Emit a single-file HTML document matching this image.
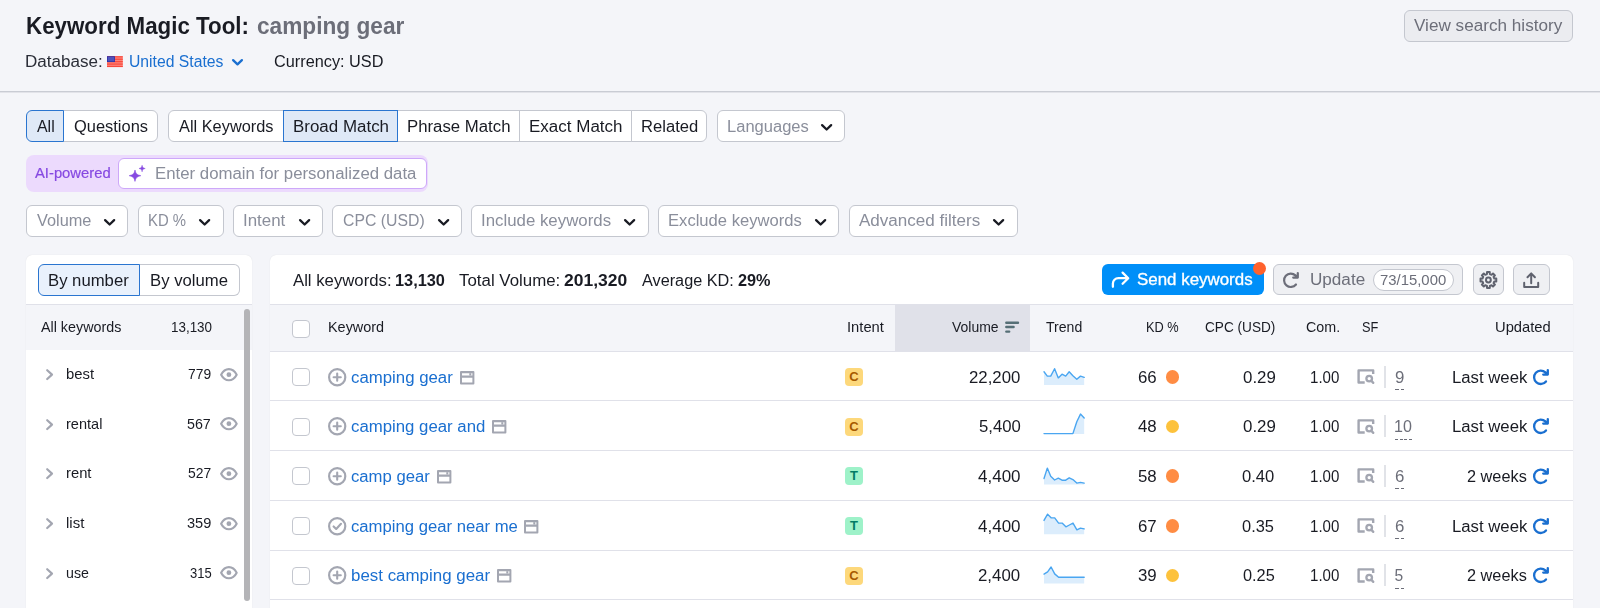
<!DOCTYPE html>
<html lang="en">
<head>
<meta charset="utf-8">
<title>Keyword Magic Tool</title>
<style>
*{box-sizing:border-box;margin:0;padding:0}
html,body{width:1600px;height:608px;overflow:hidden;background:#f4f5f9;font-family:"Liberation Sans",sans-serif}
body{position:relative}
.a{position:absolute}
.t{position:absolute;white-space:pre;z-index:5;transform-origin:0 50%}
.b{position:absolute;border:1px solid #c4c7cf;background:#fff}
.sel{background:#dfe9f7;border-color:#2a75d0;z-index:2}
.ln{position:absolute;height:1px;background:#e0e1e9}
.cb{position:absolute;left:292px;width:18px;height:18px;border:1px solid #c4c7cf;border-radius:4px;background:#fff}
.ib{position:absolute;left:845px;width:18px;height:18px;border-radius:4px;font-size:13px;font-weight:bold;line-height:18px;text-align:center}
.ic{background:#fdd87b;color:#a65a00}
.it{background:#9ef2c9;color:#007c65}
.dot{position:absolute;left:1165.8px;width:13.5px;height:13.5px;border-radius:50%}
.vd{position:absolute;left:1384px;width:2px;height:22px;background:#e1e3e8}
.du{position:absolute;height:1px;background:repeating-linear-gradient(90deg,#6c6e79 0,#6c6e79 4px,transparent 4px,transparent 5.9px)}
svg{position:absolute;overflow:visible}
#tx{position:absolute;left:0;top:0;width:1600px;height:608px;z-index:5;will-change:transform}

</style>
</head>
<body>
<svg style="left:107.2px;top:55.8px" width="15.8" height="11.3" viewBox="0 0 16 11"><rect width="16" height="11" rx="0.6" fill="#ff8379"/><g fill="#f7493d"><rect y="0" width="16" height="1.2"/><rect y="2.45" width="16" height="1.2"/><rect y="4.9" width="16" height="1.2"/><rect y="7.35" width="16" height="1.2"/><rect y="9.8" width="16" height="1.2"/></g><rect width="8" height="5.9" fill="#2a2fa8"/><rect x="0.8" y="0.8" width="6.4" height="4.3" fill="#4d52ba"/></svg>
<svg style="left:232px;top:59px" width="11" height="6.5" viewBox="0 0 11 6.5"><path d="M1.1 1.1 L5.5 5.4 L9.9 1.1" fill="none" stroke="#1a6fd0" stroke-width="2.3" stroke-linecap="round" stroke-linejoin="round"/></svg>
<div class="b" style="left:1404px;top:10px;width:169px;height:32px;border-radius:6px;background:#ebecf0"></div>
<div class="a" style="left:0;top:91px;width:1600px;height:1px;background:#c9ccd4"></div><div class="a" style="left:0;top:92px;width:1600px;height:1px;background:#e2e3e9"></div>
<div class="b sel" style="left:26px;top:110px;width:38px;height:32px;border-radius:6px 0 0 6px"></div>
<div class="b" style="left:63px;top:110px;width:95px;height:32px;border-radius:0 6px 6px 0"></div>
<div class="b" style="left:168px;top:110px;width:116px;height:32px;border-radius:6px 0 0 6px"></div>
<div class="b sel" style="left:283px;top:110px;width:115px;height:32px"></div>
<div class="b" style="left:397px;top:110px;width:123px;height:32px"></div>
<div class="b" style="left:519px;top:110px;width:113px;height:32px"></div>
<div class="b" style="left:631px;top:110px;width:76px;height:32px;border-radius:0 6px 6px 0"></div>
<div class="b" style="left:717px;top:110px;width:128px;height:32px;border-radius:6px"></div>
<svg style="left:821px;top:123.8px" width="11.25" height="6.6" viewBox="0 0 11.25 6.6"><path d="M1.1 1.1 L5.625 5.5 L10.15 1.1" fill="none" stroke="#191b23" stroke-width="2.3" stroke-linecap="round" stroke-linejoin="round"/></svg>
<div class="a" style="left:26px;top:155px;width:402px;height:36.5px;border-radius:8px;background:#ecdafd"></div>
<div class="a" style="left:118px;top:158px;width:309px;height:31px;border-radius:6px;background:#fff;border:1px solid #cda8f9"></div>
<svg style="left:129px;top:165.3px" width="16.4" height="16.6" viewBox="0 0 16.4 16.6"><path d="M6 5 C6.7 8.6 7.9 9.9 11.8 10.7 C7.9 11.5 6.7 12.8 6 16.4 C5.3 12.8 4.1 11.5 0.2 10.7 C4.1 9.9 5.3 8.6 6 5 Z" fill="#8649e1" stroke="#8649e1" stroke-width="0.6" stroke-linejoin="round"/><path d="M13.1 0.3 C13.45 2.5 14 3.1 16.2 3.5 C14 3.9 13.45 4.5 13.1 6.8 C12.75 4.5 12.2 3.9 10 3.5 C12.2 3.1 12.75 2.5 13.1 0.3 Z" fill="#8649e1" stroke="#8649e1" stroke-width="0.5" stroke-linejoin="round"/></svg>
<div class="b" style="left:26px;top:205px;width:102px;height:32px;border-radius:6px"></div>
<svg style="left:104px;top:218.6px" width="11.25" height="6.6" viewBox="0 0 11.25 6.6"><path d="M1.1 1.1 L5.625 5.5 L10.15 1.1" fill="none" stroke="#191b23" stroke-width="2.3" stroke-linecap="round" stroke-linejoin="round"/></svg>
<div class="b" style="left:138px;top:205px;width:86px;height:32px;border-radius:6px"></div>
<svg style="left:199.25px;top:218.6px" width="11.25" height="6.6" viewBox="0 0 11.25 6.6"><path d="M1.1 1.1 L5.625 5.5 L10.15 1.1" fill="none" stroke="#191b23" stroke-width="2.3" stroke-linecap="round" stroke-linejoin="round"/></svg>
<div class="b" style="left:233px;top:205px;width:90px;height:32px;border-radius:6px"></div>
<svg style="left:299px;top:218.6px" width="11.25" height="6.6" viewBox="0 0 11.25 6.6"><path d="M1.1 1.1 L5.625 5.5 L10.15 1.1" fill="none" stroke="#191b23" stroke-width="2.3" stroke-linecap="round" stroke-linejoin="round"/></svg>
<div class="b" style="left:332px;top:205px;width:130px;height:32px;border-radius:6px"></div>
<svg style="left:437.5px;top:218.6px" width="11.25" height="6.6" viewBox="0 0 11.25 6.6"><path d="M1.1 1.1 L5.625 5.5 L10.15 1.1" fill="none" stroke="#191b23" stroke-width="2.3" stroke-linecap="round" stroke-linejoin="round"/></svg>
<div class="b" style="left:471px;top:205px;width:178px;height:32px;border-radius:6px"></div>
<svg style="left:624.25px;top:218.6px" width="11.25" height="6.6" viewBox="0 0 11.25 6.6"><path d="M1.1 1.1 L5.625 5.5 L10.15 1.1" fill="none" stroke="#191b23" stroke-width="2.3" stroke-linecap="round" stroke-linejoin="round"/></svg>
<div class="b" style="left:658px;top:205px;width:181px;height:32px;border-radius:6px"></div>
<svg style="left:815px;top:218.6px" width="11.25" height="6.6" viewBox="0 0 11.25 6.6"><path d="M1.1 1.1 L5.625 5.5 L10.15 1.1" fill="none" stroke="#191b23" stroke-width="2.3" stroke-linecap="round" stroke-linejoin="round"/></svg>
<div class="b" style="left:849px;top:205px;width:169px;height:32px;border-radius:6px"></div>
<svg style="left:993px;top:218.6px" width="11.25" height="6.6" viewBox="0 0 11.25 6.6"><path d="M1.1 1.1 L5.625 5.5 L10.15 1.1" fill="none" stroke="#191b23" stroke-width="2.3" stroke-linecap="round" stroke-linejoin="round"/></svg>
<div class="a" style="left:26px;top:255px;width:225.5px;height:360px;background:#fff;border-radius:6px 6px 0 0;box-shadow:0 0 1px 0 rgba(25,27,35,.14)"></div>
<div class="b sel" style="left:38px;top:264px;width:101.5px;height:31.5px;border-radius:6px 0 0 6px;background:#e9f1fc"></div>
<div class="b" style="left:139px;top:264px;width:100.5px;height:31.5px;border-radius:0 6px 6px 0;border-left:none"></div>
<div class="ln" style="left:26px;top:304px;width:225.5px"></div>
<div class="a" style="left:26px;top:305px;width:225.5px;height:44.5px;background:#f4f5f9"></div>
<div class="a" style="left:244px;top:308.5px;width:6px;height:292px;border-radius:3px;background:#b4b4b7"></div>
<svg style="left:45.8px;top:368.9px" width="7.4" height="11.2" viewBox="0 0 7.4 11.2"><path d="M1.2 1.2 L6 5.6 L1.2 10" fill="none" stroke="#a3a6b1" stroke-width="2.2" stroke-linecap="round" stroke-linejoin="round"/></svg>
<svg style="left:220.2px;top:367.7px" width="17.8" height="13.4" viewBox="0 0 17.8 13.4"><path d="M1.1 6.7 C3.1 2.9 5.8 1.1 8.9 1.1 C12 1.1 14.7 2.9 16.7 6.7 C14.7 10.5 12 12.3 8.9 12.3 C5.8 12.3 3.1 10.5 1.1 6.7 Z" fill="none" stroke="#a3a6b1" stroke-width="2.1" stroke-linejoin="round"/><circle cx="8.9" cy="6.7" r="2.4" fill="#a3a6b1"/></svg>
<svg style="left:45.8px;top:418.6px" width="7.4" height="11.2" viewBox="0 0 7.4 11.2"><path d="M1.2 1.2 L6 5.6 L1.2 10" fill="none" stroke="#a3a6b1" stroke-width="2.2" stroke-linecap="round" stroke-linejoin="round"/></svg>
<svg style="left:220.2px;top:417.4px" width="17.8" height="13.4" viewBox="0 0 17.8 13.4"><path d="M1.1 6.7 C3.1 2.9 5.8 1.1 8.9 1.1 C12 1.1 14.7 2.9 16.7 6.7 C14.7 10.5 12 12.3 8.9 12.3 C5.8 12.3 3.1 10.5 1.1 6.7 Z" fill="none" stroke="#a3a6b1" stroke-width="2.1" stroke-linejoin="round"/><circle cx="8.9" cy="6.7" r="2.4" fill="#a3a6b1"/></svg>
<svg style="left:45.8px;top:468.2px" width="7.4" height="11.2" viewBox="0 0 7.4 11.2"><path d="M1.2 1.2 L6 5.6 L1.2 10" fill="none" stroke="#a3a6b1" stroke-width="2.2" stroke-linecap="round" stroke-linejoin="round"/></svg>
<svg style="left:220.2px;top:467.0px" width="17.8" height="13.4" viewBox="0 0 17.8 13.4"><path d="M1.1 6.7 C3.1 2.9 5.8 1.1 8.9 1.1 C12 1.1 14.7 2.9 16.7 6.7 C14.7 10.5 12 12.3 8.9 12.3 C5.8 12.3 3.1 10.5 1.1 6.7 Z" fill="none" stroke="#a3a6b1" stroke-width="2.1" stroke-linejoin="round"/><circle cx="8.9" cy="6.7" r="2.4" fill="#a3a6b1"/></svg>
<svg style="left:45.8px;top:517.9px" width="7.4" height="11.2" viewBox="0 0 7.4 11.2"><path d="M1.2 1.2 L6 5.6 L1.2 10" fill="none" stroke="#a3a6b1" stroke-width="2.2" stroke-linecap="round" stroke-linejoin="round"/></svg>
<svg style="left:220.2px;top:516.7px" width="17.8" height="13.4" viewBox="0 0 17.8 13.4"><path d="M1.1 6.7 C3.1 2.9 5.8 1.1 8.9 1.1 C12 1.1 14.7 2.9 16.7 6.7 C14.7 10.5 12 12.3 8.9 12.3 C5.8 12.3 3.1 10.5 1.1 6.7 Z" fill="none" stroke="#a3a6b1" stroke-width="2.1" stroke-linejoin="round"/><circle cx="8.9" cy="6.7" r="2.4" fill="#a3a6b1"/></svg>
<svg style="left:45.8px;top:567.6px" width="7.4" height="11.2" viewBox="0 0 7.4 11.2"><path d="M1.2 1.2 L6 5.6 L1.2 10" fill="none" stroke="#a3a6b1" stroke-width="2.2" stroke-linecap="round" stroke-linejoin="round"/></svg>
<svg style="left:220.2px;top:566.4px" width="17.8" height="13.4" viewBox="0 0 17.8 13.4"><path d="M1.1 6.7 C3.1 2.9 5.8 1.1 8.9 1.1 C12 1.1 14.7 2.9 16.7 6.7 C14.7 10.5 12 12.3 8.9 12.3 C5.8 12.3 3.1 10.5 1.1 6.7 Z" fill="none" stroke="#a3a6b1" stroke-width="2.1" stroke-linejoin="round"/><circle cx="8.9" cy="6.7" r="2.4" fill="#a3a6b1"/></svg>
<div class="a" style="left:270px;top:255px;width:1303px;height:360px;background:#fff;border-radius:6px 6px 0 0;box-shadow:0 0 1px 0 rgba(25,27,35,.14)"></div>
<div class="a" style="left:1102px;top:264px;width:161.5px;height:31px;border-radius:6px;background:#008ff8"></div>
<svg style="left:1111px;top:271px" width="19" height="17" viewBox="0 0 19 17"><path d="M1.9 15.8 V12.6 A5.4 5.4 0 0 1 7.3 7.2 H16.6 M11.6 1.6 L17.2 7.2 L11.6 12.8" fill="none" stroke="#fff" stroke-width="2.3" stroke-linecap="round" stroke-linejoin="round"/></svg>
<div class="a" style="left:1252.6px;top:261.7px;width:13.6px;height:13.6px;border-radius:50%;background:#ff622d"></div>
<div class="b" style="left:1273px;top:264px;width:190px;height:31px;border-radius:6px;background:#eff0f3"></div>
<svg style="left:1282.9px;top:272.2px" width="16.5" height="16" viewBox="0 0 16.5 16"><path d="M13 12.5 A6.7 6.7 0 1 1 12.4 3.4 L14.5 5.4 M14.8 1.1 V5.6 H10.2" fill="none" stroke="#6c6e79" stroke-width="2.2" stroke-linecap="round" stroke-linejoin="round"/></svg>
<div class="b" style="left:1373px;top:269px;width:81px;height:22px;border-radius:11px"></div>
<div class="b" style="left:1472.5px;top:264px;width:31.5px;height:31px;border-radius:6px;background:#eff0f3"></div>
<svg style="left:1479px;top:270.5px" width="19" height="19" viewBox="0 0 19 19"><path d="M17.28 7.62 L17.28 10.38 L15.33 10.42 L14.60 12.19 L15.95 13.60 L14.00 15.55 L12.59 14.20 L10.82 14.93 L10.78 16.88 L8.02 16.88 L7.98 14.93 L6.21 14.20 L4.80 15.55 L2.85 13.60 L4.20 12.19 L3.47 10.42 L1.52 10.38 L1.52 7.62 L3.47 7.58 L4.20 5.81 L2.85 4.40 L4.80 2.45 L6.21 3.80 L7.98 3.07 L8.02 1.12 L10.78 1.12 L10.82 3.07 L12.59 3.80 L14.00 2.45 L15.95 4.40 L14.60 5.81 L15.33 7.58 Z" fill="none" stroke="#5f626e" stroke-width="2" stroke-linejoin="round"/><circle cx="9.4" cy="9.0" r="2.4" fill="none" stroke="#5f626e" stroke-width="2"/></svg>
<div class="b" style="left:1513px;top:264px;width:37px;height:31px;border-radius:6px;background:#eff0f3"></div>
<svg style="left:1523px;top:271.5px" width="16.5" height="17" viewBox="0 0 16.5 17"><path d="M8.2 11.2 V1.5 M4.5 5.2 L8.2 1.4 L11.9 5.2 M1.2 10.8 V14.9 H15.2 V10.8" fill="none" stroke="#5f626e" stroke-width="2" stroke-linecap="round" stroke-linejoin="round"/></svg>
<div class="ln" style="left:270px;top:304px;width:1303px"></div>
<div class="a" style="left:270px;top:305px;width:1303px;height:46.5px;background:#f4f5f9"></div>
<div class="a" style="left:895px;top:305px;width:135px;height:46.5px;background:#e0e1e9"></div>
<div class="ln" style="left:270px;top:351px;width:1303px"></div>
<svg style="left:1005px;top:321px" width="14.5" height="12" viewBox="0 0 14.5 12"><path d="M1.3 1.7 H13 M1.3 6 H8.6 M1.3 10.6 H4.2" fill="none" stroke="#566f76" stroke-width="2.4" stroke-linecap="round"/></svg>
<div class="cb" style="top:320px"></div>
<div class="ln" style="left:270px;top:400px;width:1303px"></div>
<div class="ln" style="left:270px;top:450px;width:1303px"></div>
<div class="ln" style="left:270px;top:500px;width:1303px"></div>
<div class="ln" style="left:270px;top:550px;width:1303px"></div>
<div class="ln" style="left:270px;top:599px;width:1303px"></div>
<div class="cb" style="top:367.9px"></div>
<svg style="left:328.2px;top:367.5px" width="18.4" height="18.4" viewBox="0 0 18.4 18.4"><circle cx="9.2" cy="9.2" r="8.1" fill="none" stroke="#a3a6b1" stroke-width="2.2"/><path d="M9.2 5.6 V12.8 M5.6 9.2 H12.8" fill="none" stroke="#a3a6b1" stroke-width="2.1" stroke-linecap="round"/></svg>
<svg style="left:459.5px;top:370.5px" width="14.4" height="13.6" viewBox="0 0 14.4 12.6" preserveAspectRatio="none"><path d="M1 1 H13.4 V11.6 H1 Z M1 5.2 H13.4" fill="none" stroke="#a3a6b1" stroke-width="2" stroke-linejoin="round"/><rect x="9.3" y="2" width="2" height="2.2" fill="#a3a6b1"/></svg>
<div class="ib ic" style="top:367.8px">C</div>
<svg style="left:1044px;top:363.5px" width="40.4" height="22" viewBox="0 0 40.4 22"><path d="M0 7.8 L3.3 12.1 L6.7 12.1 L10.6 4.7 L14.3 13.9 L18 10.2 L21.7 12.1 L25.2 7.8 L28.9 11.7 L32.8 15.2 L36.5 12.1 L40.2 13.4 L40.2 21.0 L0 21.0 Z" fill="#dcedfc"/><path d="M0 7.8 L3.3 12.1 L6.7 12.1 L10.6 4.7 L14.3 13.9 L18 10.2 L21.7 12.1 L25.2 7.8 L28.9 11.7 L32.8 15.2 L36.5 12.1 L40.2 13.4" fill="none" stroke="#4aa6f1" stroke-width="1.4" stroke-linejoin="round" stroke-linecap="round"/></svg>
<div class="dot" style="top:370.0px;background:#ff8c43"></div>
<svg style="left:1357.2px;top:368.8px" width="17.4" height="15.4" viewBox="0 0 17.4 15.4"><path d="M7.7 13.5 H1.6 V1.4 H16.2 V4.9" fill="none" stroke="#a3a6b1" stroke-width="2.4" stroke-linejoin="round"/><circle cx="12.2" cy="9.6" r="2.8" fill="none" stroke="#a3a6b1" stroke-width="2.3"/><path d="M14.4 11.9 L16.3 13.9" stroke="#a3a6b1" stroke-width="2.3" stroke-linecap="round"/></svg>
<div class="vd" style="top:365.5px"></div>
<div class="du" style="left:1394.6px;top:388.8px;width:9.6px;background:repeating-linear-gradient(90deg,#6c6e79 0,#6c6e79 4.1px,transparent 4.1px,transparent 5.6px)"></div>
<svg style="left:1533.4px;top:368.7px" width="16.5" height="16" viewBox="0 0 16.5 16"><path d="M13 12.5 A6.7 6.7 0 1 1 12.4 3.4 L14.5 5.4 M14.8 1.1 V5.6 H10.2" fill="none" stroke="#1a6fd0" stroke-width="2.3" stroke-linecap="round" stroke-linejoin="round"/></svg>
<div class="cb" style="top:417.6px"></div>
<svg style="left:328.2px;top:417.2px" width="18.4" height="18.4" viewBox="0 0 18.4 18.4"><circle cx="9.2" cy="9.2" r="8.1" fill="none" stroke="#a3a6b1" stroke-width="2.2"/><path d="M9.2 5.6 V12.8 M5.6 9.2 H12.8" fill="none" stroke="#a3a6b1" stroke-width="2.1" stroke-linecap="round"/></svg>
<svg style="left:491.5px;top:420.2px" width="14.4" height="13.6" viewBox="0 0 14.4 12.6" preserveAspectRatio="none"><path d="M1 1 H13.4 V11.6 H1 Z M1 5.2 H13.4" fill="none" stroke="#a3a6b1" stroke-width="2" stroke-linejoin="round"/><rect x="9.3" y="2" width="2" height="2.2" fill="#a3a6b1"/></svg>
<div class="ib ic" style="top:417.5px">C</div>
<svg style="left:1044px;top:413.2px" width="40.4" height="22" viewBox="0 0 40.4 22"><path d="M0 20.6 L28.9 20.6 L32.8 8.7 L36.5 1.1 L40.2 5.0 L40.2 21.1 L0 21.1 Z" fill="#dcedfc"/><path d="M0 20.6 L28.9 20.6 L32.8 8.7 L36.5 1.1 L40.2 5.0" fill="none" stroke="#4aa6f1" stroke-width="1.4" stroke-linejoin="round" stroke-linecap="round"/></svg>
<div class="dot" style="top:419.7px;background:#fdc23c"></div>
<svg style="left:1357.2px;top:418.5px" width="17.4" height="15.4" viewBox="0 0 17.4 15.4"><path d="M7.7 13.5 H1.6 V1.4 H16.2 V4.9" fill="none" stroke="#a3a6b1" stroke-width="2.4" stroke-linejoin="round"/><circle cx="12.2" cy="9.6" r="2.8" fill="none" stroke="#a3a6b1" stroke-width="2.3"/><path d="M14.4 11.9 L16.3 13.9" stroke="#a3a6b1" stroke-width="2.3" stroke-linecap="round"/></svg>
<div class="vd" style="top:415.2px"></div>
<div class="du" style="left:1394.7px;top:438.5px;width:16.9px;background:repeating-linear-gradient(90deg,#6c6e79 0,#6c6e79 3.3px,transparent 3.3px,transparent 4.5px)"></div>
<svg style="left:1533.4px;top:418.4px" width="16.5" height="16" viewBox="0 0 16.5 16"><path d="M13 12.5 A6.7 6.7 0 1 1 12.4 3.4 L14.5 5.4 M14.8 1.1 V5.6 H10.2" fill="none" stroke="#1a6fd0" stroke-width="2.3" stroke-linecap="round" stroke-linejoin="round"/></svg>
<div class="cb" style="top:467.2px"></div>
<svg style="left:328.2px;top:466.8px" width="18.4" height="18.4" viewBox="0 0 18.4 18.4"><circle cx="9.2" cy="9.2" r="8.1" fill="none" stroke="#a3a6b1" stroke-width="2.2"/><path d="M9.2 5.6 V12.8 M5.6 9.2 H12.8" fill="none" stroke="#a3a6b1" stroke-width="2.1" stroke-linecap="round"/></svg>
<svg style="left:436.5px;top:469.8px" width="14.4" height="13.6" viewBox="0 0 14.4 12.6" preserveAspectRatio="none"><path d="M1 1 H13.4 V11.6 H1 Z M1 5.2 H13.4" fill="none" stroke="#a3a6b1" stroke-width="2" stroke-linejoin="round"/><rect x="9.3" y="2" width="2" height="2.2" fill="#a3a6b1"/></svg>
<div class="ib it" style="top:467.1px">T</div>
<svg style="left:1044px;top:462.8px" width="40.4" height="22" viewBox="0 0 40.4 22"><path d="M0 15.5 L3.3 5.1 L6.7 13.3 L10.6 17.0 L14.3 15.1 L18 17.2 L21.7 17.2 L25.2 14.8 L28.9 16.6 L32.8 20.1 L36.5 19.4 L40.2 20.1 L40.2 21.5 L0 21.5 Z" fill="#dcedfc"/><path d="M0 15.5 L3.3 5.1 L6.7 13.3 L10.6 17.0 L14.3 15.1 L18 17.2 L21.7 17.2 L25.2 14.8 L28.9 16.6 L32.8 20.1 L36.5 19.4 L40.2 20.1" fill="none" stroke="#4aa6f1" stroke-width="1.4" stroke-linejoin="round" stroke-linecap="round"/></svg>
<div class="dot" style="top:469.3px;background:#ff8c43"></div>
<svg style="left:1357.2px;top:468.1px" width="17.4" height="15.4" viewBox="0 0 17.4 15.4"><path d="M7.7 13.5 H1.6 V1.4 H16.2 V4.9" fill="none" stroke="#a3a6b1" stroke-width="2.4" stroke-linejoin="round"/><circle cx="12.2" cy="9.6" r="2.8" fill="none" stroke="#a3a6b1" stroke-width="2.3"/><path d="M14.4 11.9 L16.3 13.9" stroke="#a3a6b1" stroke-width="2.3" stroke-linecap="round"/></svg>
<div class="vd" style="top:464.8px"></div>
<div class="du" style="left:1394.6px;top:488.1px;width:9.6px;background:repeating-linear-gradient(90deg,#6c6e79 0,#6c6e79 4.1px,transparent 4.1px,transparent 5.6px)"></div>
<svg style="left:1533.4px;top:468.0px" width="16.5" height="16" viewBox="0 0 16.5 16"><path d="M13 12.5 A6.7 6.7 0 1 1 12.4 3.4 L14.5 5.4 M14.8 1.1 V5.6 H10.2" fill="none" stroke="#1a6fd0" stroke-width="2.3" stroke-linecap="round" stroke-linejoin="round"/></svg>
<div class="cb" style="top:516.9px"></div>
<svg style="left:328.2px;top:516.5px" width="18.4" height="18.4" viewBox="0 0 18.4 18.4"><circle cx="9.2" cy="9.2" r="8.1" fill="none" stroke="#a3a6b1" stroke-width="2.2"/><path d="M5.6 9.4 L8.2 12 L13 6.8" stroke-linejoin="round" fill="none" stroke="#a3a6b1" stroke-width="2.1" stroke-linecap="round"/></svg>
<svg style="left:524.0px;top:519.5px" width="14.4" height="13.6" viewBox="0 0 14.4 12.6" preserveAspectRatio="none"><path d="M1 1 H13.4 V11.6 H1 Z M1 5.2 H13.4" fill="none" stroke="#a3a6b1" stroke-width="2" stroke-linejoin="round"/><rect x="9.3" y="2" width="2" height="2.2" fill="#a3a6b1"/></svg>
<div class="ib it" style="top:516.8px">T</div>
<svg style="left:1044px;top:512.5px" width="40.4" height="22" viewBox="0 0 40.4 22"><path d="M0 7.4 L3.6 1.2 L7.1 4.7 L10.7 4.9 L14.6 10.1 L18.1 10.1 L21.9 13.8 L25.4 12.0 L29 10.1 L32.9 16.8 L36.4 15.1 L40.2 15.9 L40.2 21.3 L0 21.3 Z" fill="#dcedfc"/><path d="M0 7.4 L3.6 1.2 L7.1 4.7 L10.7 4.9 L14.6 10.1 L18.1 10.1 L21.9 13.8 L25.4 12.0 L29 10.1 L32.9 16.8 L36.4 15.1 L40.2 15.9" fill="none" stroke="#4aa6f1" stroke-width="1.4" stroke-linejoin="round" stroke-linecap="round"/></svg>
<div class="dot" style="top:519.0px;background:#ff8c43"></div>
<svg style="left:1357.2px;top:517.8px" width="17.4" height="15.4" viewBox="0 0 17.4 15.4"><path d="M7.7 13.5 H1.6 V1.4 H16.2 V4.9" fill="none" stroke="#a3a6b1" stroke-width="2.4" stroke-linejoin="round"/><circle cx="12.2" cy="9.6" r="2.8" fill="none" stroke="#a3a6b1" stroke-width="2.3"/><path d="M14.4 11.9 L16.3 13.9" stroke="#a3a6b1" stroke-width="2.3" stroke-linecap="round"/></svg>
<div class="vd" style="top:514.5px"></div>
<div class="du" style="left:1394.6px;top:537.8px;width:9.6px;background:repeating-linear-gradient(90deg,#6c6e79 0,#6c6e79 4.1px,transparent 4.1px,transparent 5.6px)"></div>
<svg style="left:1533.4px;top:517.7px" width="16.5" height="16" viewBox="0 0 16.5 16"><path d="M13 12.5 A6.7 6.7 0 1 1 12.4 3.4 L14.5 5.4 M14.8 1.1 V5.6 H10.2" fill="none" stroke="#1a6fd0" stroke-width="2.3" stroke-linecap="round" stroke-linejoin="round"/></svg>
<div class="cb" style="top:566.6px"></div>
<svg style="left:328.2px;top:566.2px" width="18.4" height="18.4" viewBox="0 0 18.4 18.4"><circle cx="9.2" cy="9.2" r="8.1" fill="none" stroke="#a3a6b1" stroke-width="2.2"/><path d="M9.2 5.6 V12.8 M5.6 9.2 H12.8" fill="none" stroke="#a3a6b1" stroke-width="2.1" stroke-linecap="round"/></svg>
<svg style="left:496.5px;top:569.2px" width="14.4" height="13.6" viewBox="0 0 14.4 12.6" preserveAspectRatio="none"><path d="M1 1 H13.4 V11.6 H1 Z M1 5.2 H13.4" fill="none" stroke="#a3a6b1" stroke-width="2" stroke-linejoin="round"/><rect x="9.3" y="2" width="2" height="2.2" fill="#a3a6b1"/></svg>
<div class="ib ic" style="top:566.5px">C</div>
<svg style="left:1044px;top:562.2px" width="40.4" height="22" viewBox="0 0 40.4 22"><path d="M0 12.1 L3.6 9.8 L7.1 5.0 L10.7 11.9 L14.6 15.3 L40.2 15.3 L40.2 21.4 L0 21.4 Z" fill="#dcedfc"/><path d="M0 12.1 L3.6 9.8 L7.1 5.0 L10.7 11.9 L14.6 15.3 L40.2 15.3" fill="none" stroke="#4aa6f1" stroke-width="1.4" stroke-linejoin="round" stroke-linecap="round"/></svg>
<div class="dot" style="top:568.7px;background:#fdc23c"></div>
<svg style="left:1357.2px;top:567.5px" width="17.4" height="15.4" viewBox="0 0 17.4 15.4"><path d="M7.7 13.5 H1.6 V1.4 H16.2 V4.9" fill="none" stroke="#a3a6b1" stroke-width="2.4" stroke-linejoin="round"/><circle cx="12.2" cy="9.6" r="2.8" fill="none" stroke="#a3a6b1" stroke-width="2.3"/><path d="M14.4 11.9 L16.3 13.9" stroke="#a3a6b1" stroke-width="2.3" stroke-linecap="round"/></svg>
<div class="vd" style="top:564.2px"></div>
<div class="du" style="left:1394.6px;top:587.5px;width:9.6px;background:repeating-linear-gradient(90deg,#6c6e79 0,#6c6e79 4.1px,transparent 4.1px,transparent 5.6px)"></div>
<svg style="left:1533.4px;top:567.4px" width="16.5" height="16" viewBox="0 0 16.5 16"><path d="M13 12.5 A6.7 6.7 0 1 1 12.4 3.4 L14.5 5.4 M14.8 1.1 V5.6 H10.2" fill="none" stroke="#1a6fd0" stroke-width="2.3" stroke-linecap="round" stroke-linejoin="round"/></svg>
<div id="tx">
<div class="t" style="left:25.57px;top:14.18px;font-size:24px;line-height:24px;transform:scaleX(0.9308);color:#191b23;font-weight:bold;">Keyword Magic Tool:</div>
<div class="t" style="left:257.00px;top:14.18px;font-size:24px;line-height:24px;transform:scaleX(0.9441);color:#6c6e79;font-weight:bold;">camping gear</div>
<div class="t" style="left:25.41px;top:54.39px;font-size:15.6px;line-height:15.6px;transform:scaleX(1.0938);color:#2b2e38;">Database:</div>
<div class="t" style="left:128.59px;top:54.39px;font-size:15.6px;line-height:15.6px;transform:scaleX(1.0084);color:#1a6fd0;">United States</div>
<div class="t" style="left:273.70px;top:54.39px;font-size:15.6px;line-height:15.6px;transform:scaleX(1.0441);color:#191b23;">Currency: USD</div>
<div class="t" style="left:1414.10px;top:18.49px;font-size:15.6px;line-height:15.6px;transform:scaleX(1.0990);color:#6c6e79;">View search history</div>
<div class="t" style="left:36.70px;top:119.19px;font-size:15.6px;line-height:15.6px;transform:scaleX(1.0198);color:#191b23;">All</div>
<div class="t" style="left:74.20px;top:119.19px;font-size:15.6px;line-height:15.6px;transform:scaleX(1.0538);color:#191b23;">Questions</div>
<div class="t" style="left:178.70px;top:119.19px;font-size:15.6px;line-height:15.6px;transform:scaleX(1.0484);color:#191b23;">All Keywords</div>
<div class="t" style="left:292.61px;top:119.19px;font-size:15.6px;line-height:15.6px;transform:scaleX(1.0861);color:#191b23;">Broad Match</div>
<div class="t" style="left:407.12px;top:119.19px;font-size:15.6px;line-height:15.6px;transform:scaleX(1.0758);color:#191b23;">Phrase Match</div>
<div class="t" style="left:528.86px;top:119.19px;font-size:15.6px;line-height:15.6px;transform:scaleX(1.0901);color:#191b23;">Exact Match</div>
<div class="t" style="left:640.64px;top:119.19px;font-size:15.6px;line-height:15.6px;transform:scaleX(1.0648);color:#191b23;">Related</div>
<div class="t" style="left:726.64px;top:119.19px;font-size:15.6px;line-height:15.6px;transform:scaleX(1.0598);color:#8a8e9b;">Languages</div>
<div class="t" style="left:35.10px;top:166.18px;font-size:14.2px;line-height:14.2px;transform:scaleX(1.0424);color:#8649e1;-webkit-text-stroke:0.2px #8649e1;">AI-powered</div>
<div class="t" style="left:154.62px;top:166.19px;font-size:15.6px;line-height:15.6px;transform:scaleX(1.0771);color:#8a8e9b;">Enter domain for personalized data</div>
<div class="t" style="left:37.20px;top:213.49px;font-size:15.6px;line-height:15.6px;transform:scaleX(1.0460);color:#8a8e9b;">Volume</div>
<div class="t" style="left:147.75px;top:213.49px;font-size:15.6px;line-height:15.6px;transform:scaleX(0.9540);color:#8a8e9b;">KD %</div>
<div class="t" style="left:242.87px;top:213.49px;font-size:15.6px;line-height:15.6px;transform:scaleX(1.0845);color:#8a8e9b;">Intent</div>
<div class="t" style="left:342.80px;top:213.49px;font-size:15.6px;line-height:15.6px;transform:scaleX(1.0140);color:#8a8e9b;">CPC (USD)</div>
<div class="t" style="left:480.87px;top:213.49px;font-size:15.6px;line-height:15.6px;transform:scaleX(1.0795);color:#8a8e9b;">Include keywords</div>
<div class="t" style="left:667.64px;top:213.49px;font-size:15.6px;line-height:15.6px;transform:scaleX(1.0647);color:#8a8e9b;">Exclude keywords</div>
<div class="t" style="left:858.80px;top:213.49px;font-size:15.6px;line-height:15.6px;transform:scaleX(1.0931);color:#8a8e9b;">Advanced filters</div>
<div class="t" style="left:48.13px;top:272.69px;font-size:15.6px;line-height:15.6px;transform:scaleX(1.0706);color:#191b23;">By number</div>
<div class="t" style="left:150.13px;top:272.69px;font-size:15.6px;line-height:15.6px;transform:scaleX(1.0713);color:#191b23;">By volume</div>
<div class="t" style="left:41.20px;top:319.98px;font-size:14.2px;line-height:14.2px;transform:scaleX(1.0083);color:#191b23;">All keywords</div>
<div class="t" style="left:170.75px;top:319.98px;font-size:14.2px;line-height:14.2px;transform:scaleX(0.9458);color:#191b23;">13,130</div>
<div class="t" style="left:65.50px;top:366.88px;font-size:14.2px;line-height:14.2px;transform:scaleX(1.0456);color:#191b23;">best</div>
<div class="t" style="left:188.10px;top:366.88px;font-size:14.2px;line-height:14.2px;transform:scaleX(0.9756);color:#191b23;">779</div>
<div class="t" style="left:65.50px;top:416.58px;font-size:14.2px;line-height:14.2px;transform:scaleX(1.0244);color:#191b23;">rental</div>
<div class="t" style="left:187.40px;top:416.58px;font-size:14.2px;line-height:14.2px;transform:scaleX(1.0050);color:#191b23;">567</div>
<div class="t" style="left:65.50px;top:466.18px;font-size:14.2px;line-height:14.2px;transform:scaleX(1.0406);color:#191b23;">rent</div>
<div class="t" style="left:188.00px;top:466.18px;font-size:14.2px;line-height:14.2px;transform:scaleX(0.9798);color:#191b23;">527</div>
<div class="t" style="left:65.50px;top:515.88px;font-size:14.2px;line-height:14.2px;transform:scaleX(1.0576);color:#191b23;">list</div>
<div class="t" style="left:186.90px;top:515.88px;font-size:14.2px;line-height:14.2px;transform:scaleX(1.0260);color:#191b23;">359</div>
<div class="t" style="left:65.50px;top:565.58px;font-size:14.2px;line-height:14.2px;transform:scaleX(1.0007);color:#191b23;">use</div>
<div class="t" style="left:189.50px;top:565.58px;font-size:14.2px;line-height:14.2px;transform:scaleX(0.9167);color:#191b23;">315</div>
<div class="t" style="left:292.60px;top:272.69px;font-size:15.6px;line-height:15.6px;transform:scaleX(1.0726);color:#191b23;">All keywords:</div>
<div class="t" style="left:394.90px;top:272.69px;font-size:15.6px;line-height:15.6px;transform:scaleX(1.0474);color:#191b23;font-weight:bold;">13,130</div>
<div class="t" style="left:458.80px;top:272.69px;font-size:15.6px;line-height:15.6px;transform:scaleX(1.0815);color:#191b23;">Total Volume:</div>
<div class="t" style="left:564.40px;top:272.69px;font-size:15.6px;line-height:15.6px;transform:scaleX(1.1218);color:#191b23;font-weight:bold;">201,320</div>
<div class="t" style="left:642.00px;top:272.69px;font-size:15.6px;line-height:15.6px;transform:scaleX(1.0416);color:#191b23;">Average KD:</div>
<div class="t" style="left:738.10px;top:272.69px;font-size:15.6px;line-height:15.6px;transform:scaleX(1.0432);color:#191b23;font-weight:bold;">29%</div>
<div class="t" style="left:1137.40px;top:272.19px;font-size:15.6px;line-height:15.6px;transform:scaleX(1.0841);color:#fff;-webkit-text-stroke:0.3px #fff;">Send keywords</div>
<div class="t" style="left:1309.50px;top:272.19px;font-size:15.6px;line-height:15.6px;transform:scaleX(1.0965);color:#6c6e79;">Update</div>
<div class="t" style="left:1380.10px;top:272.68px;font-size:14.2px;line-height:14.2px;transform:scaleX(1.0486);color:#6c6e79;">73/15,000</div>
<div class="t" style="left:328.18px;top:320.18px;font-size:14.2px;line-height:14.2px;transform:scaleX(1.0167);color:#191b23;">Keyword</div>
<div class="t" style="left:846.96px;top:320.18px;font-size:14.2px;line-height:14.2px;transform:scaleX(1.0389);color:#191b23;">Intent</div>
<div class="t" style="left:951.70px;top:320.18px;font-size:14.2px;line-height:14.2px;transform:scaleX(0.9846);color:#191b23;">Volume</div>
<div class="t" style="left:1045.90px;top:320.18px;font-size:14.2px;line-height:14.2px;transform:scaleX(0.9931);color:#191b23;">Trend</div>
<div class="t" style="left:1146.01px;top:320.18px;font-size:14.2px;line-height:14.2px;transform:scaleX(0.9000);color:#191b23;">KD %</div>
<div class="t" style="left:1205.00px;top:320.18px;font-size:14.2px;line-height:14.2px;transform:scaleX(0.9604);color:#191b23;">CPC (USD)</div>
<div class="t" style="left:1306.20px;top:320.18px;font-size:14.2px;line-height:14.2px;transform:scaleX(1.0075);color:#191b23;">Com.</div>
<div class="t" style="left:1362.14px;top:320.18px;font-size:14.2px;line-height:14.2px;transform:scaleX(0.9000);color:#191b23;">SF</div>
<div class="t" style="left:1494.66px;top:320.18px;font-size:14.2px;line-height:14.2px;transform:scaleX(1.0377);color:#191b23;">Updated</div>
<div class="t" style="left:350.90px;top:369.69px;font-size:15.6px;line-height:15.6px;transform:scaleX(1.0775);color:#1a6fd0;">camping gear</div>
<div class="t" style="left:969.20px;top:369.69px;font-size:15.6px;line-height:15.6px;transform:scaleX(1.0766);color:#191b23;">22,200</div>
<div class="t" style="left:1137.80px;top:369.69px;font-size:15.6px;line-height:15.6px;transform:scaleX(1.0800);color:#191b23;">66</div>
<div class="t" style="left:1242.60px;top:369.69px;font-size:15.6px;line-height:15.6px;transform:scaleX(1.0816);color:#191b23;">0.29</div>
<div class="t" style="left:1309.93px;top:369.69px;font-size:15.6px;line-height:15.6px;transform:scaleX(0.9671);color:#191b23;">1.00</div>
<div class="t" style="left:1394.78px;top:369.69px;font-size:15.6px;line-height:15.6px;transform:scaleX(1.0800);color:#6c6e79;">9</div>
<div class="t" style="left:1451.53px;top:369.69px;font-size:15.6px;line-height:15.6px;transform:scaleX(1.0733);color:#191b23;">Last week</div>
<div class="t" style="left:350.90px;top:419.39px;font-size:15.6px;line-height:15.6px;transform:scaleX(1.0760);color:#1a6fd0;">camping gear and</div>
<div class="t" style="left:978.70px;top:419.39px;font-size:15.6px;line-height:15.6px;transform:scaleX(1.0724);color:#191b23;">5,400</div>
<div class="t" style="left:1137.80px;top:419.39px;font-size:15.6px;line-height:15.6px;transform:scaleX(1.0800);color:#191b23;">48</div>
<div class="t" style="left:1242.60px;top:419.39px;font-size:15.6px;line-height:15.6px;transform:scaleX(1.0816);color:#191b23;">0.29</div>
<div class="t" style="left:1309.93px;top:419.39px;font-size:15.6px;line-height:15.6px;transform:scaleX(0.9671);color:#191b23;">1.00</div>
<div class="t" style="left:1394.17px;top:419.39px;font-size:15.6px;line-height:15.6px;transform:scaleX(1.0316);color:#6c6e79;">10</div>
<div class="t" style="left:1451.53px;top:419.39px;font-size:15.6px;line-height:15.6px;transform:scaleX(1.0733);color:#191b23;">Last week</div>
<div class="t" style="left:350.90px;top:468.99px;font-size:15.6px;line-height:15.6px;transform:scaleX(1.0697);color:#1a6fd0;">camp gear</div>
<div class="t" style="left:978.00px;top:468.99px;font-size:15.6px;line-height:15.6px;transform:scaleX(1.0902);color:#191b23;">4,400</div>
<div class="t" style="left:1137.80px;top:468.99px;font-size:15.6px;line-height:15.6px;transform:scaleX(1.0800);color:#191b23;">58</div>
<div class="t" style="left:1242.00px;top:468.99px;font-size:15.6px;line-height:15.6px;transform:scaleX(1.0659);color:#191b23;">0.40</div>
<div class="t" style="left:1309.93px;top:468.99px;font-size:15.6px;line-height:15.6px;transform:scaleX(0.9671);color:#191b23;">1.00</div>
<div class="t" style="left:1394.78px;top:468.99px;font-size:15.6px;line-height:15.6px;transform:scaleX(1.0800);color:#6c6e79;">6</div>
<div class="t" style="left:1467.10px;top:468.99px;font-size:15.6px;line-height:15.6px;transform:scaleX(1.0451);color:#191b23;">2 weeks</div>
<div class="t" style="left:350.90px;top:518.69px;font-size:15.6px;line-height:15.6px;transform:scaleX(1.0692);color:#1a6fd0;">camping gear near me</div>
<div class="t" style="left:978.00px;top:518.69px;font-size:15.6px;line-height:15.6px;transform:scaleX(1.0902);color:#191b23;">4,400</div>
<div class="t" style="left:1137.80px;top:518.69px;font-size:15.6px;line-height:15.6px;transform:scaleX(1.0800);color:#191b23;">67</div>
<div class="t" style="left:1242.40px;top:518.69px;font-size:15.6px;line-height:15.6px;transform:scaleX(1.0529);color:#191b23;">0.35</div>
<div class="t" style="left:1309.93px;top:518.69px;font-size:15.6px;line-height:15.6px;transform:scaleX(0.9671);color:#191b23;">1.00</div>
<div class="t" style="left:1394.78px;top:518.69px;font-size:15.6px;line-height:15.6px;transform:scaleX(1.0800);color:#6c6e79;">6</div>
<div class="t" style="left:1451.53px;top:518.69px;font-size:15.6px;line-height:15.6px;transform:scaleX(1.0733);color:#191b23;">Last week</div>
<div class="t" style="left:350.62px;top:568.39px;font-size:15.6px;line-height:15.6px;transform:scaleX(1.0842);color:#1a6fd0;">best camping gear</div>
<div class="t" style="left:978.40px;top:568.39px;font-size:15.6px;line-height:15.6px;transform:scaleX(1.0801);color:#191b23;">2,400</div>
<div class="t" style="left:1137.80px;top:568.39px;font-size:15.6px;line-height:15.6px;transform:scaleX(1.0800);color:#191b23;">39</div>
<div class="t" style="left:1242.60px;top:568.39px;font-size:15.6px;line-height:15.6px;transform:scaleX(1.0464);color:#191b23;">0.25</div>
<div class="t" style="left:1309.93px;top:568.39px;font-size:15.6px;line-height:15.6px;transform:scaleX(0.9671);color:#191b23;">1.00</div>
<div class="t" style="left:1394.60px;top:568.39px;font-size:15.6px;line-height:15.6px;transform:scaleX(1.0000);color:#6c6e79;">5</div>
<div class="t" style="left:1467.10px;top:568.39px;font-size:15.6px;line-height:15.6px;transform:scaleX(1.0451);color:#191b23;">2 weeks</div>
</div>
</body>
</html>
